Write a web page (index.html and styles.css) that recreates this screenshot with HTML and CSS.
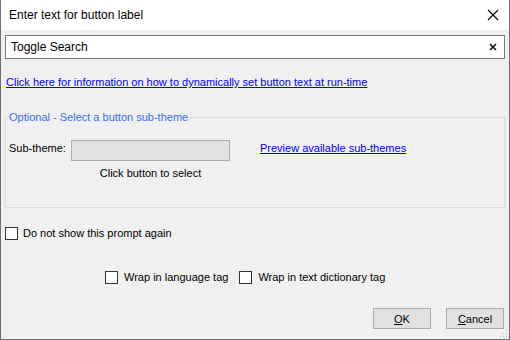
FILE: index.html
```html
<!DOCTYPE html>
<html lang="en">
  <head>
    <meta charset="UTF-8" />
    <title>Enter text for button label</title>
    <link rel="stylesheet" href="styles.css">
  </head>
  <body>
    <div class="dialog">
      <!-- 标题栏 -->
      <div class="titlebar">
        <span class="title">Enter text for button label</span>
        <svg class="close" width="12" height="12" viewBox="0 0 12 12">
          <path d="M1 1 L11 11 M11 1 L1 11" stroke="#000" stroke-width="1.1" fill="none" />
        </svg>
      </div>

      <div class="content">
        <!-- 输入框 -->
        <div class="text-box">
          <span class="text-value">Toggle Search</span>
          <svg class="clear" width="8" height="8" viewBox="0 0 8 8">
            <path d="M1 1 L7 7 M7 1 L1 7" stroke="#111" stroke-width="1.6" fill="none" />
          </svg>
        </div>

        <a class="link info-link" href="#">Click here for information on how to dynamically set button text at run-time</a>

        <!-- 子主题 -->
        <fieldset class="group">
          <legend>Optional - Select a button sub-theme</legend>
          <div class="theme-row">
            <span class="label">Sub-theme:</span>
            <div class="picker">
              <div class="picker-box"></div>
              <span class="picker-hint">Click button to select</span>
            </div>
            <a class="link preview-link" href="#">Preview available sub-themes</a>
          </div>
        </fieldset>

        <label class="check first-check">
          <span class="box"></span>
          <span>Do not show this prompt again</span>
        </label>

        <div class="wrap-row">
          <label class="check">
            <span class="box"></span>
            <span>Wrap in language tag</span>
          </label>
          <label class="check">
            <span class="box"></span>
            <span>Wrap in text dictionary tag</span>
          </label>
        </div>

        <!-- 按钮 -->
        <div class="buttons">
          <button><u>O</u>K</button>
          <button><u>C</u>ancel</button>
        </div>
      </div>

      <svg class="grip" width="8" height="8" viewBox="0 0 8 8">
        <rect x="6" y="0" width="1" height="1" fill="#b8b8b8" />
        <rect x="3" y="3" width="1" height="1" fill="#b8b8b8" />
        <rect x="6" y="3" width="1" height="1" fill="#b8b8b8" />
        <rect x="0" y="6" width="1" height="1" fill="#b8b8b8" />
        <rect x="3" y="6" width="1" height="1" fill="#b8b8b8" />
        <rect x="6" y="6" width="1" height="1" fill="#b8b8b8" />
      </svg>
    </div>
  </body>
</html>
```

FILE: styles.css
```css
/* 基本页面样式 */
body {
  margin: 0;
  font-family: 'Liberation Sans', Arial, sans-serif;
  font-size: 11px;
  color: #000;
}

.dialog {
  position: relative;
  width: 510px;
  height: 340px;
  box-sizing: border-box;
  background: #f0f0f0;
  border-left: 1px solid #6f6f6f;
  border-right: 1px solid #6f6f6f;
  border-bottom: 1px solid #6f6f6f;
  overflow: hidden;
}

/* 标题栏 */
.titlebar {
  height: 30px;
  background: #fff;
  display: flex;
  align-items: center;
  justify-content: space-between;
  padding: 0 10px 0 8px;
}

.title {
  font-size: 12px;
  padding-bottom: 1px;
}

.close {
  display: block;
}

.content {
  padding: 5px 4px 0 4px;
  display: flex;
  flex-direction: column;
}

/* 输入框 */
.text-box {
  height: 24px;
  box-sizing: border-box;
  background: #fff;
  border: 1px solid #7a7a7a;
  display: flex;
  align-items: center;
  justify-content: space-between;
  padding: 0 7px 0 5px;
}

.text-value {
  font-size: 12px;
}

.clear {
  display: block;
}

.link {
  color: #0000ff;
  text-decoration: underline;
  line-height: 14px;
}

.info-link {
  margin-top: 16px;
  align-self: flex-start;
  padding-left: 1px;
}

/* 分组框 */
.group {
  margin: 21px 0 0 0;
  padding: 16px 4px 0 3px;
  height: 98px;
  box-sizing: border-box;
  border: 1px solid #dcdcdc;
  min-width: 0;
}

.group legend {
  color: #3b6cf2;
  padding: 0 1px;
  margin-left: -1px;
  line-height: 14px;
}

.theme-row {
  display: flex;
  align-items: flex-start;
}

.label {
  line-height: 14px;
  margin-top: 1px;
  width: 62px;
  white-space: nowrap;
}

.picker {
  display: flex;
  flex-direction: column;
  align-items: center;
}

.picker-box {
  width: 159px;
  height: 21px;
  box-sizing: border-box;
  background: #e1e1e1;
  border: 1px solid #adadad;
}

.picker-hint {
  margin-top: 5px;
  line-height: 14px;
}

.preview-link {
  margin-top: 1px;
  margin-left: 30px;
}

/* 复选框 */
.check {
  display: flex;
  align-items: center;
  gap: 6px;
  line-height: 14px;
}

.box {
  width: 13px;
  height: 13px;
  box-sizing: border-box;
  border: 1px solid #333;
  background: #fff;
}

.first-check {
  margin-top: 18px;
  align-self: flex-start;
  gap: 5px;
}

.wrap-row {
  margin-top: 30px;
  padding-left: 100px;
  display: flex;
  gap: 11px;
}

/* 按钮 */
.buttons {
  margin-top: 24px;
  display: flex;
  justify-content: flex-end;
  gap: 15px;
  padding-right: 1px;
}

button {
  width: 58px;
  height: 21px;
  background: #e1e1e1;
  border: 1px solid #adadad;
  font-family: inherit;
  font-size: 11px;
  color: #000;
  padding: 0;
}

.grip {
  position: absolute;
  right: 1px;
  bottom: 1px;
}
```
